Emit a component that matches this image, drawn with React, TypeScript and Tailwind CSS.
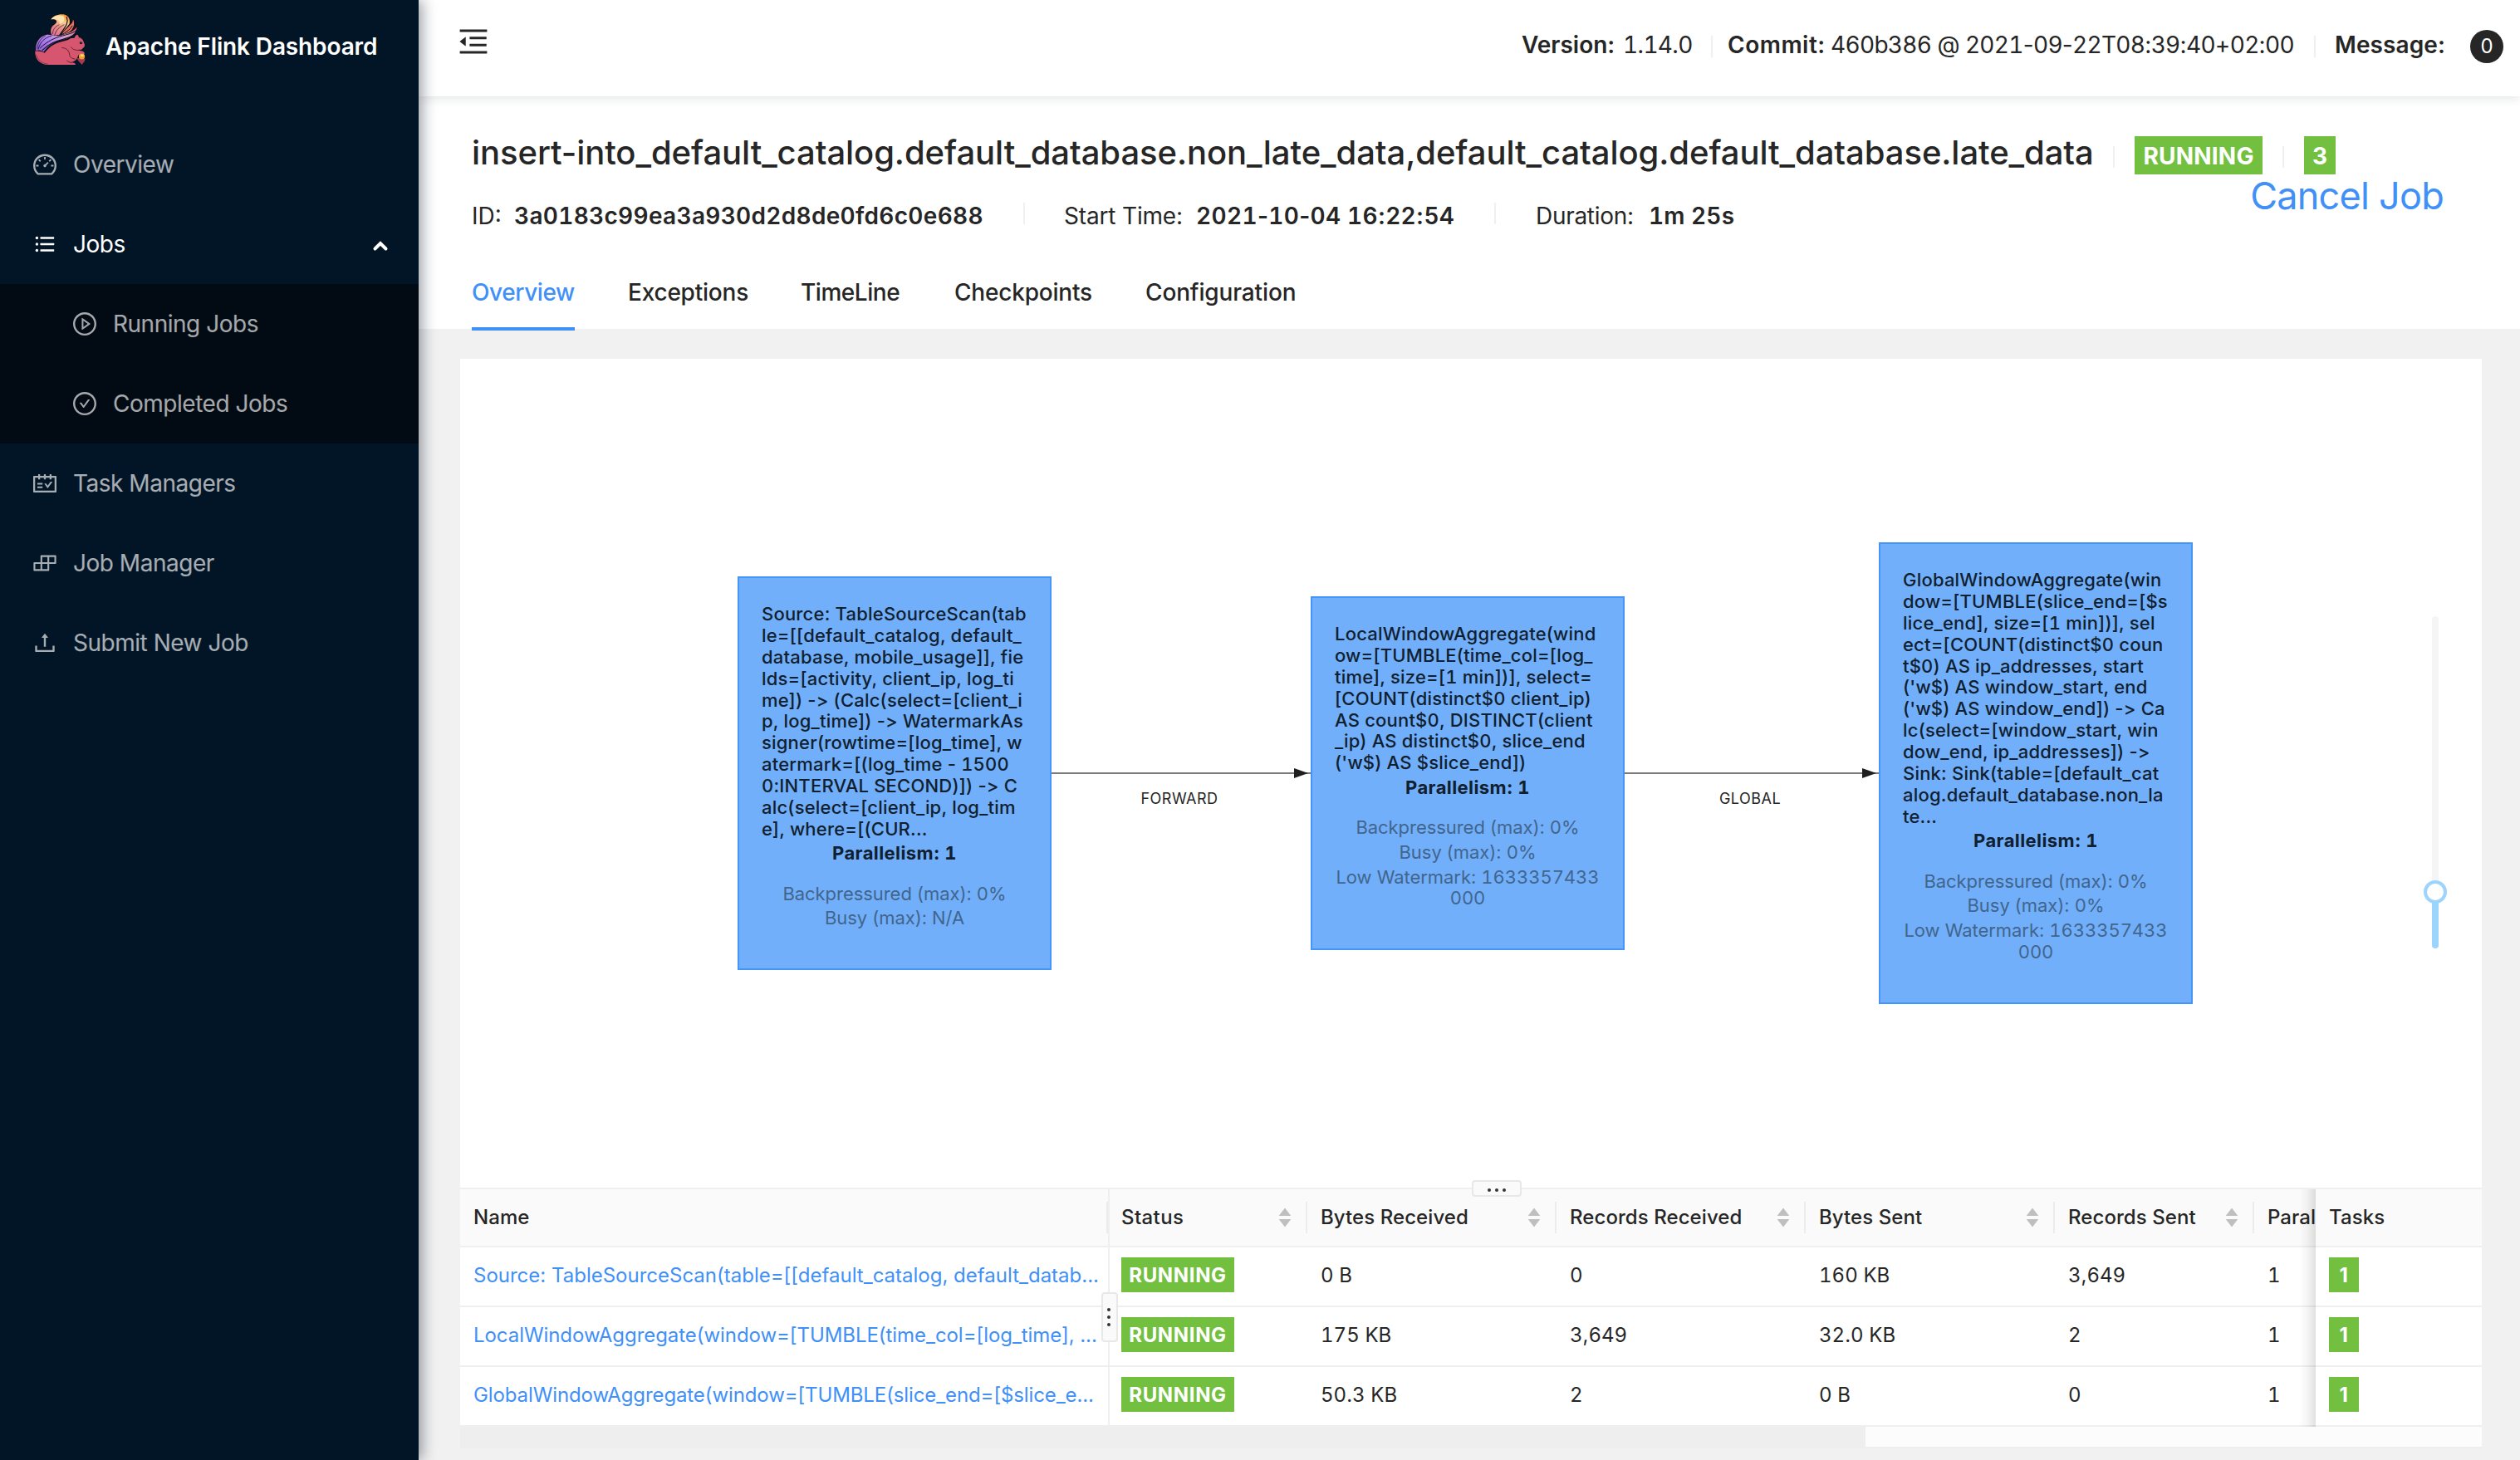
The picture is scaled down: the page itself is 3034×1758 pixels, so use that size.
import type { ReactNode } from "react";
import {
  AiOutlineBuild,
  AiOutlineCheckCircle,
  AiOutlineDashboard,
  AiOutlineMenuFold,
  AiOutlinePlayCircle,
  AiOutlineSchedule,
  AiOutlineUpload,
} from "react-icons/ai";

function FlinkLogo() {
  return (
    <svg viewBox="32 20 186 190" className="h-[63px] w-[62px] shrink-0">
      <defs>
        <linearGradient id="plume" x1="0.7" y1="0" x2="0.2" y2="1">
          <stop offset="0" stopColor="#f19a2e" />
          <stop offset="0.3" stopColor="#f8cf95" />
          <stop offset="0.6" stopColor="#ec8d86" />
          <stop offset="1" stopColor="#dd6f92" />
        </linearGradient>
        <linearGradient id="sweep" x1="0" y1="1" x2="1" y2="0.1">
          <stop offset="0" stopColor="#8a5bd6" />
          <stop offset="0.45" stopColor="#b486f2" />
          <stop offset="0.75" stopColor="#d9a3c8" />
          <stop offset="1" stopColor="#d6536d" />
        </linearGradient>
      </defs>
      <path d="M37 146 C30 178 46 207 84 207 L182 207 C183 201 174 199 164 199 C178 195 186 190 188 182 L194 170 L210 170 C217 168 217 160 206 157 L190 154 C200 154 208 151 209 146 C216 143 217 135 213 128 C210 113 200 108 194 108 C194 102 190 98 187 98 C181 102 179 107 178 110 L140 112 L80 130 Z" fill="#d6566f" />
      <path d="M35 158 C32 124 48 100 78 94 C88 92 90 84 91 74 C93 62 104 56 108 50 C104 44 98 44 91 43 C98 27 122 20 142 23 C154 25 164 34 167 48 C171 44 173 40 173 36 C180 46 182 56 180 66 L189 64 C190 80 178 106 158 115 C130 126 100 124 70 164 C60 158 46 156 35 158 Z" fill="#10101c" />
      <path d="M93 42 C102 28 124 21 144 25 C158 30 164 44 160 58 C150 74 134 86 126 98 C114 100 104 104 94 96 C90 84 92 70 104 62 C112 56 116 52 112 46 C106 40 100 42 93 42 Z" fill="url(#plume)" />
      <path d="M93 42 C102 30 122 24 138 30 C146 40 140 54 124 60 C128 46 116 38 93 42 Z" fill="#fbe3ae" />
      <path d="M162 62 C170 58 173 50 173 42 C179 54 178 68 168 80 C158 90 146 94 132 98 C138 84 152 76 162 62 Z" fill="#e8705a" />
      <path d="M38 156 C35 128 50 104 78 98 C92 96 100 102 118 102 C146 98 174 88 187 70 C186 88 172 104 152 111 C126 120 96 120 66 160 C58 154 46 153 38 156 Z" fill="url(#sweep)" />
      <g fill="none" stroke="#10101c" strokeLinecap="round">
        <path d="M150 34 C160 58 138 76 124 100" strokeWidth="3.5" />
        <path d="M140 62 C124 70 112 78 106 100" strokeWidth="2" />
        <path d="M122 62 C108 68 100 78 99 94" strokeWidth="1.8" />
        <path d="M170 66 C162 82 144 90 130 99" strokeWidth="3" />
        <path d="M188 80 C160 106 110 92 54 146" strokeWidth="3" />
        <path d="M94 102 C72 108 54 122 47 150" strokeWidth="2.5" />
        <path d="M72 102 C54 112 44 130 43 148" strokeWidth="2" />
        <path d="M178 98 C140 122 106 110 62 154" strokeWidth="3.5" />
      </g>
      <g fill="none" stroke="#5a1626" strokeWidth="2.6" strokeLinecap="round">
        <path d="M133 145 C152 147 158 156 160 168 C161 180 168 185 180 186" />
        <path d="M168 199 C160 199 155 196 151 192" />
        <path d="M166 143 C172 152 184 156 198 153" />
        <path d="M40 172 C46 190 60 202 80 204" stroke="#8d2f46" />
      </g>
      <circle cx="202" cy="127" r="5" fill="#10101c" />
      <circle cx="203" cy="125" r="1.6" fill="#fff" />
      <path d="M188 182 C190 194 200 200 206 207 C210 198 216 198 217 184 Z" fill="#a8384f" />
      <ellipse cx="205" cy="177" rx="11" ry="10.5" fill="#f0a32c" />
      <ellipse cx="206" cy="173" rx="6" ry="4" fill="#fbe08c" />
    </svg>
  );
}

/** Sets digit runs in tabular figures and leaves punctuation proportional. */
function Num({ children }: { children: string }) {
  return (
    <span className="whitespace-pre">
      {children.split(/(\d+)/).map((part, i) =>
        i % 2 ? (
          <span key={i} className="tabular-nums">
            {part}
          </span>
        ) : (
          part
        ),
      )}
    </span>
  );
}

function ListIcon() {
  return (
    <svg viewBox="0 0 32 32" className="size-8 shrink-0" fill="currentColor">
      {[8.5, 16, 23.5].map((y) => (
        <g key={y}>
          <circle cx="6.4" cy={y} r="1.7" />
          <rect x="10.5" y={y - 1.2} width="16.7" height="2.4" rx="0.4" />
        </g>
      ))}
    </svg>
  );
}

function NavItem({ icon, label, sub, active, children }: { icon: ReactNode; label: string; sub?: boolean; active?: boolean; children?: ReactNode }) {
  return (
    <div
      className={`flex h-24 items-center gap-[18px] text-[28px] tracking-[-0.48px] ${sub ? "pl-[86px]" : "pl-[38px]"} ${active ? "text-white" : "text-white/65"}`}
    >
      {icon}
      <span>{label}</span>
      {children}
    </div>
  );
}

function Sidebar() {
  return (
    <aside className="relative z-20 w-[504px] shrink-0 bg-[#021526] shadow-[4px_0_16px_rgba(10,16,40,0.42)]">
      <div className="flex h-[116px] items-start pt-[16px] pl-[41px]">
        <FlinkLogo />
        <span className="mt-[22px] ml-[24px] text-[28px] leading-9 font-semibold tracking-[-0.13px] text-white">Apache Flink Dashboard</span>
      </div>
      <nav className="pt-[34px]">
        <NavItem icon={<AiOutlineDashboard className="size-8" />} label="Overview" />
        <NavItem icon={<ListIcon />} label="Jobs" active>
          <svg viewBox="0 0 20 14" className="mt-[3px] mr-[36px] ml-auto h-[14px] w-5" fill="none" stroke="currentColor" strokeWidth="4" strokeLinecap="round">
            <path d="M3.5 10.5 L10 4 L16.5 10.5" />
          </svg>
        </NavItem>
        <div className="bg-[#020a13]">
          <NavItem sub icon={<AiOutlinePlayCircle className="size-8" />} label="Running Jobs" />
          <NavItem sub icon={<AiOutlineCheckCircle className="size-8" />} label="Completed Jobs" />
        </div>
        <NavItem icon={<AiOutlineSchedule className="size-8" />} label="Task Managers" />
        <NavItem icon={<AiOutlineBuild className="size-8" />} label="Job Manager" />
        <NavItem icon={<AiOutlineUpload className="size-8" />} label="Submit New Job" />
      </nav>
    </aside>
  );
}

function Divider({ className }: { className: string }) {
  return <span className={`h-[26px] w-[2px] shrink-0 bg-[#f0f0f0] ${className}`} />;
}

function TopBar() {
  return (
    <header className="relative z-10 flex h-[116px] items-start bg-white pl-[45px] shadow-[0_2px_12px_rgba(0,21,41,0.12)]">
      <AiOutlineMenuFold className="mt-[29px] size-[42px]" />
      <div className="mt-9 mr-5 ml-auto flex h-9 items-center text-[28px]">
        <strong className="w-[122px] font-semibold">Version:</strong>
        <span className="w-[83px] tracking-[-0.9px]">
          <Num>1.14.0</Num>
        </span>
        <Divider className="mt-[3px] mr-[18px] ml-[23px]" />
        <strong className="w-[124px] font-semibold tracking-[0.5px]">Commit:</strong>
        <span className="w-[556px] tracking-[-0.7px] whitespace-nowrap">
          <Num>460b386 @ 2021-09-22T08:39:40+02:00</Num>
        </span>
        <Divider className="mt-[3px] mr-[23px] ml-[26px]" />
        <strong className="w-[163px] font-semibold tracking-[0.1px]">Message:</strong>
        <span className="mt-1 flex size-10 items-center justify-center rounded-full bg-[#262626] text-[24px] text-white">0</span>
      </div>
    </header>
  );
}

const tabs = [
  { label: "Overview", cls: "w-[124px] mr-[64px] tracking-[-0.4px]" },
  { label: "Exceptions", cls: "mr-[64px] w-[144px] tracking-[-0.22px]" },
  { label: "TimeLine", cls: "mr-[64px] w-[121px] tracking-[-0.45px]" },
  { label: "Checkpoints", cls: "mr-[65px] w-[165px] tracking-[-0.2px]" },
  { label: "Configuration", cls: "tracking-[-0.14px]" },
];

function JobHeader() {
  return (
    <section className="h-[280px] bg-white pt-9 pr-[92px] pl-[64px]">
      <div className="flex h-16 items-center">
        <h1 className="w-[1976px] text-[40px] font-medium tracking-[-0.07px] whitespace-nowrap">
          insert-into_default_catalog.default_database.non_late_data,default_catalog.default_database.late_data
        </h1>
        <Divider className="mt-[10px] mr-6" />
        <span className="mt-[6px] flex h-[46px] w-[154px] items-center justify-center bg-[#73c041] pt-px text-[28px] font-bold tracking-[0.2px] text-white">RUNNING</span>
        <Divider className="mt-[10px] mr-6 ml-6" />
        <span className="mt-[6px] flex h-[46px] w-[38px] items-center justify-center bg-[#73c041] pt-px text-[28px] font-bold text-white">3</span>
      </div>
      <div className="mt-[22px] flex h-11 items-center text-[28px] whitespace-nowrap">
        <span className="w-[51px]">ID:</span>
        <strong className="w-[613px] font-semibold tracking-[0.3px]">
          <Num>3a0183c99ea3a930d2d8de0fd6c0e688</Num>
        </strong>
        <Divider className="-mt-[6px] mr-[47px]" />
        <span className="w-[159px] tracking-[-0.17px]">Start Time:</span>
        <strong className="w-[359px] font-semibold tracking-[0.35px]">
          <Num>2021-10-04 16:22:54</Num>
        </strong>
        <Divider className="-mt-[6px] mr-[48px]" />
        <span className="w-[136px] tracking-[-0.3px]">Duration:</span>
        <strong className="font-semibold tracking-[0.2px]">
          <Num>1m 25s</Num>
        </strong>
        <a className="-mt-[49px] ml-auto text-[45px] tracking-[-0.76px] text-[#4090f7]">Cancel Job</a>
      </div>
      <div className="mt-6 flex h-[92px] text-[28px] font-medium whitespace-nowrap">
        {tabs.map((t, i) => (
          <span key={t.label} className={`flex items-center ${t.cls} ${i === 0 ? "z-[1] border-b-4 border-[#4090f7] pt-1 text-[#4090f7]" : ""}`}>
            {t.label}
          </span>
        ))}
      </div>
    </section>
  );
}

type GraphNode = { id: string; place: string; title: string[]; stats: string[] };

const nodes: GraphNode[] = [
  {
    id: "source",
    place: "left-[334px] top-[262px] h-[474px]",
    title: [
      "Source: TableSourceScan(tab",
      "le=[[default_catalog, default_",
      "database, mobile_usage]], fie",
      "lds=[activity, client_ip, log_ti",
      "me]) -> (Calc(select=[client_i",
      "p, log_time]) -> WatermarkAs",
      "signer(rowtime=[log_time], w",
      "atermark=[(log_time - 1500",
      "0:INTERVAL SECOND)]) -> C",
      "alc(select=[client_ip, log_tim",
      "e], where=[(CUR...",
    ],
    stats: ["Backpressured (max): 0%", "Busy (max): N/A"],
  },
  {
    id: "local",
    place: "left-[1024px] top-[286px] h-[426px]",
    title: [
      "LocalWindowAggregate(wind",
      "ow=[TUMBLE(time_col=[log_",
      "time], size=[1 min])], select=",
      "[COUNT(distinct$0 client_ip)",
      "AS count$0, DISTINCT(client",
      "_ip) AS distinct$0, slice_end",
      "('w$) AS $slice_end])",
    ],
    stats: ["Backpressured (max): 0%", "Busy (max): 0%", "Low Watermark: 1633357433\n000"],
  },
  {
    id: "global",
    place: "left-[1708px] top-[221px] h-[556px]",
    title: [
      "GlobalWindowAggregate(win",
      "dow=[TUMBLE(slice_end=[$s",
      "lice_end], size=[1 min])], sel",
      "ect=[COUNT(distinct$0 coun",
      "t$0) AS ip_addresses, start",
      "('w$) AS window_start, end",
      "('w$) AS window_end]) -> Ca",
      "lc(select=[window_start, win",
      "dow_end, ip_addresses]) ->",
      "Sink: Sink(table=[default_cat",
      "alog.default_database.non_la",
      "te...",
    ],
    stats: ["Backpressured (max): 0%", "Busy (max): 0%", "Low Watermark: 1633357433\n000"],
  },
];

function NodeCard({ node }: { node: GraphNode }) {
  return (
    <div
      className={`absolute w-[378px] border-2 border-[#4595f8] bg-[#71affa] pt-[31px] text-[22px] leading-[25.87px] whitespace-pre [font-feature-settings:'calt'_0] ${node.place}`}
    >
      <div className="pl-[27px] font-medium tracking-[0.2px] text-[#10202f]">
        {node.title.map((line) => (
          <div key={line}>
            <Num>{line}</Num>
          </div>
        ))}
      </div>
      <div className="mt-[3.6px] text-center font-bold tracking-[0.4px] text-[#10202f]">
        <Num>Parallelism: 1</Num>
      </div>
      <div className="mt-[22.6px] flex flex-col gap-[3.8px] text-center tracking-[-0.05px] text-[#41658d]">
        {node.stats.map((s) => (
          <div key={s}>
            <Num>{s}</Num>
          </div>
        ))}
      </div>
    </div>
  );
}

function Edge({ place, label, width }: { place: string; label: string; width: number }) {
  return (
    <div className={`absolute top-[490px] flex flex-col items-center ${place}`}>
      <svg width={width} height="18" viewBox={`0 0 ${width} 18`}>
        <rect x="0" y="8" width={width} height="2" fill="#7a7a7a" />
        <path d={`M${width - 20} 3 L${width - 3} 9 L${width - 20} 15 Z`} fill="#1f1f1f" />
      </svg>
      <span className="mt-[10px] pr-1 text-[18px] leading-6 tracking-[0.5px] text-[#262626]">{label}</span>
    </div>
  );
}

function JobGraph() {
  return (
    <div className="relative h-[998px] bg-white">
      <Edge place="left-[712px]" label="FORWARD" width={312} />
      <Edge place="left-[1402px]" label="GLOBAL" width={306} />
      {nodes.map((n) => (
        <NodeCard key={n.id} node={n} />
      ))}
      <div className="absolute top-[310px] left-[2374px] h-[400px] w-2 rounded-full bg-[#f5f5f5]">
        <div className="absolute bottom-0 h-[68px] w-2 rounded-full bg-[#9dd4fb]" />
        <div className="absolute top-[318px] -left-[10px] size-7 rounded-full border-4 border-[#9dd4fb] bg-white" />
      </div>
    </div>
  );
}

const columns = [
  { label: "Bytes Received", cls: "w-[300px]" },
  { label: "Records Received", cls: "w-[300px]" },
  { label: "Bytes Sent", cls: "w-[300px]" },
  { label: "Records Sent", cls: "w-[240px]" },
];

const rows = [
  { name: "Source: TableSourceScan(table=[[default_catalog, default_datab...", cls: "", values: ["0 B", "0", "160 KB", "3,649"] },
  { name: "LocalWindowAggregate(window=[TUMBLE(time_col=[log_time], ...", cls: "tracking-[-0.06px]", values: ["175 KB", "3,649", "32.0 KB", "2"] },
  { name: "GlobalWindowAggregate(window=[TUMBLE(slice_end=[$slice_e...", cls: "tracking-[-0.11px]", values: ["50.3 KB", "2", "0 B", "0"] },
];

function Sorter() {
  return (
    <svg viewBox="0 0 16 24" className="mr-[17px] ml-auto h-6 w-4" fill="#bfbfbf">
      <path d="M8 0.5 L15.3 10 H0.7 Z" />
      <path d="M8 23.5 L15.3 14 H0.7 Z" />
    </svg>
  );
}

function HeadDivider() {
  return <span className="h-[38px] w-[2px] bg-[#ececec]" />;
}

function Tag({ children, wide }: { children: string; wide?: boolean }) {
  return (
    <span className={`flex h-[42px] items-center justify-center bg-[#73c041] pt-px text-[24px] font-bold tracking-[0.65px] text-white ${wide ? "w-[136px]" : "w-9"}`}>{children}</span>
  );
}

function VertexTable() {
  return (
    <div className="relative border-t-2 border-[#efefef] text-[24px] whitespace-nowrap">
      <div className="flex h-[70px] items-center border-b-2 border-[#efefef] bg-[#fafafa] font-medium tracking-[0.07px]">
        <div className="flex h-full w-[782px] items-center justify-between border-r-2 border-[#efefef] pl-4">
          Name
          <HeadDivider />
        </div>
        <div className="flex w-[238px] items-center pl-[14px] tracking-[0.4px]">
          Status
          <Sorter />
          <HeadDivider />
        </div>
        {columns.map((c) => (
          <div key={c.label} className={`flex items-center pl-4 ${c.cls}`}>
            {c.label}
            <Sorter />
            <HeadDivider />
          </div>
        ))}
        <div className="w-[74px] pl-4">Paral</div>
        <div className="z-[1] w-[200px] pl-4">Tasks</div>
      </div>
      {rows.map((r) => (
        <div key={r.name} className="flex h-[72px] items-center border-b-2 border-[#efefef] bg-white">
          <div className={`flex h-full w-[782px] items-center border-r-2 border-[#efefef] pb-[2px] pl-4 text-[#4090f7] ${r.cls}`}>
            {r.name}
          </div>
          <div className="w-[238px] pb-1 pl-[14px]">
            <Tag wide>RUNNING</Tag>
          </div>
          {r.values.map((v, i) => (
            <div key={columns[i].label} className={`pb-[2px] pl-4 ${columns[i].cls}`}>
              <Num>{v}</Num>
            </div>
          ))}
          <div className="w-[74px] pb-[2px] pl-4 tabular-nums">1</div>
          <div className="w-[200px] pb-1 pl-4">
            <Tag>1</Tag>
          </div>
        </div>
      ))}
      <div className="absolute top-0 right-[200px] h-[286px] w-5 bg-linear-to-l from-black/12 via-black/4 to-transparent" />
      <div className="flex h-[26px] border-b-2 border-[#eeeeee]">
        <div className="w-[1692px] bg-[#eeeeee]" />
        <div className="flex-1 bg-[#fcfcfc]" />
      </div>
      <div className="absolute -top-[11px] left-[1218px] flex h-5 w-[60px] items-center justify-center gap-[5px] rounded-[4px] border-2 border-[#e8e8e8] bg-[#fafafa] pt-1">
        <i className="size-1 rounded-full bg-[#333]" />
        <i className="size-1 rounded-full bg-[#333]" />
        <i className="size-1 rounded-full bg-[#333]" />
      </div>
      <div className="absolute top-[124px] left-[772px] flex h-[60px] w-5 flex-col items-center justify-center gap-[5px] rounded-[4px] border-2 border-[#e8e8e8] bg-[#fafafa] pr-[3px]">
        <i className="size-1 rounded-full bg-[#333]" />
        <i className="size-1 rounded-full bg-[#333]" />
        <i className="size-1 rounded-full bg-[#333]" />
      </div>
    </div>
  );
}

export default function App() {
  return (
    <div className="flex h-[1758px] w-[3034px] overflow-hidden bg-[#f1f1f1] font-[Inter,sans-serif] text-[#262626]">
      <Sidebar />
      <main className="flex-1">
        <TopBar />
        <JobHeader />
        <div className="mt-9 mr-[46px] ml-[50px]">
          <JobGraph />
          <VertexTable />
        </div>
      </main>
    </div>
  );
}
